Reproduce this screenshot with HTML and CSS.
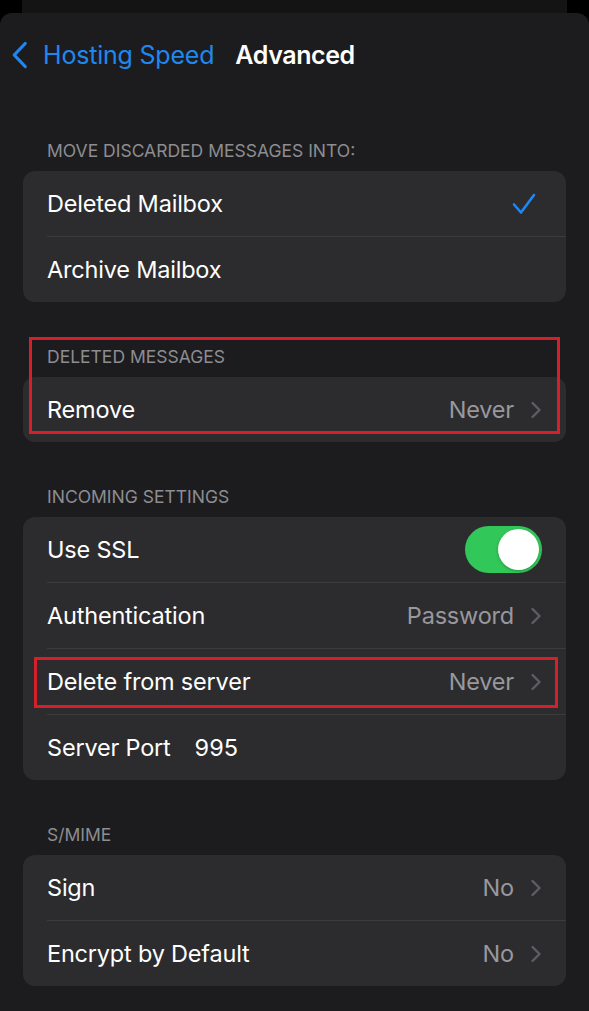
FILE: index.html
```html
<!DOCTYPE html>
<html>
<head>
<meta charset="utf-8">
<link rel="stylesheet" href="styles.css">
</head>
<body>
<div class="back-card"></div>
<div class="sheet">
  <div class="nav">
    <div class="back">
      <svg class="back-chevron" width="18" height="28" viewBox="0 0 18 28"><path d="M15.2 2.5 L4.2 14 L15.2 25.5" fill="none" stroke="#1f88f0" stroke-width="3.2" stroke-linecap="round" stroke-linejoin="round"/></svg>
      <span class="back-label">Hosting Speed</span>
    </div>
    <div class="title">Advanced</div>
  </div>

  <div class="content">
    <section class="section">
      <div class="sec-header">MOVE DISCARDED MESSAGES INTO:</div>
      <div class="group">
        <div class="row">
          <span class="label">Deleted Mailbox</span>
          <svg class="check" width="24" height="22" viewBox="0 0 24 22"><path d="M2 11.5 L9 19.5 L22 2" fill="none" stroke="#1f88f0" stroke-width="2.6" stroke-linecap="round" stroke-linejoin="round"/></svg>
        </div>
        <div class="row">
          <span class="label">Archive Mailbox</span>
        </div>
      </div>
    </section>

    <section class="section">
      <div class="sec-header">DELETED MESSAGES</div>
      <div class="group">
        <div class="row">
          <span class="label">Remove</span>
          <span class="value">Never</span>
          <svg class="chev" width="12" height="18" viewBox="0 0 12 18"><path d="M2.5 2 L9.5 9 L2.5 16" fill="none" stroke="#5d5d62" stroke-width="2.4" stroke-linecap="round" stroke-linejoin="round"/></svg>
        </div>
      </div>
      <div class="annot annot-deleted"></div>
    </section>

    <section class="section">
      <div class="sec-header">INCOMING SETTINGS</div>
      <div class="group">
        <div class="row">
          <span class="label">Use SSL</span>
          <div class="toggle"><div class="knob"></div></div>
        </div>
        <div class="row">
          <span class="label">Authentication</span>
          <span class="value">Password</span>
          <svg class="chev" width="12" height="18" viewBox="0 0 12 18"><path d="M2.5 2 L9.5 9 L2.5 16" fill="none" stroke="#5d5d62" stroke-width="2.4" stroke-linecap="round" stroke-linejoin="round"/></svg>
        </div>
        <div class="row">
          <span class="label">Delete from server</span>
          <span class="value">Never</span>
          <svg class="chev" width="12" height="18" viewBox="0 0 12 18"><path d="M2.5 2 L9.5 9 L2.5 16" fill="none" stroke="#5d5d62" stroke-width="2.4" stroke-linecap="round" stroke-linejoin="round"/></svg>
          <div class="annot annot-server"></div>
        </div>
        <div class="row">
          <span class="label port-label">Server Port</span>
          <span class="port-value">995</span>
        </div>
      </div>
    </section>

    <section class="section">
      <div class="sec-header">S/MIME</div>
      <div class="group">
        <div class="row">
          <span class="label">Sign</span>
          <span class="value">No</span>
          <svg class="chev" width="12" height="18" viewBox="0 0 12 18"><path d="M2.5 2 L9.5 9 L2.5 16" fill="none" stroke="#5d5d62" stroke-width="2.4" stroke-linecap="round" stroke-linejoin="round"/></svg>
        </div>
        <div class="row">
          <span class="label">Encrypt by Default</span>
          <span class="value">No</span>
          <svg class="chev" width="12" height="18" viewBox="0 0 12 18"><path d="M2.5 2 L9.5 9 L2.5 16" fill="none" stroke="#5d5d62" stroke-width="2.4" stroke-linecap="round" stroke-linejoin="round"/></svg>
        </div>
      </div>
    </section>
  </div>
</div>
</body>
</html>
```

FILE: styles.css
```css
* { box-sizing: border-box; }
html, body {
  margin: 0;
  padding: 0;
  background: #000;
}
body {
  font-family: "Inter", "Roboto", "Liberation Sans", sans-serif;
  color: #fff;
  width: 589px;
  height: 1011px;
  overflow: hidden;
}
.back-card {
  height: 13px;
  margin: 0 22px;
  background: #141415;
}
.sheet {
  background: #1c1c1e;
  border-radius: 12px 12px 0 0;
  height: 998px;
}
.nav {
  height: 83px;
  display: flex;
  align-items: center;
  padding-left: 10px;
}
.back {
  display: flex;
  align-items: center;
  gap: 15px;
}
.back-chevron { display: block; }
.back-label {
  color: #1f88f0;
  font-size: 25px;
  letter-spacing: -0.2px;
}
.title {
  margin-left: 21px;
  font-size: 25px;
  font-weight: 600;
  letter-spacing: -0.4px;
}
.content {
  padding: 0 23px;
}
.section {
  position: relative;
  padding-top: 45px;
}
.sec-header {
  height: 20px;
  line-height: 20px;
  padding-left: 24px;
  margin-bottom: 10px;
  font-size: 17.5px;
  color: #8d8d92;
}
.group {
  background: #2c2c2e;
  border-radius: 12px;
  overflow: hidden;
}
.row {
  position: relative;
  height: 65px;
  display: flex;
  align-items: center;
  padding: 0 24px;
}
.row + .row {
  height: 66px;
  padding-top: 1px;
}
.row + .row::before {
  content: "";
  position: absolute;
  left: 24px;
  right: 0;
  top: 0;
  height: 1px;
  background: #3b3b3e;
}
.label {
  font-size: 23.5px;
  letter-spacing: -0.2px;
  flex: 1;
}
.value {
  font-size: 23.5px;
  color: #98989e;
  letter-spacing: -0.2px;
  margin-right: 16px;
}
.chev { display: block; }
.check { display: block; margin-right: 6px; }
.toggle {
  width: 77px;
  height: 47px;
  border-radius: 24px;
  background: #32c759;
  position: relative;
}
.knob {
  position: absolute;
  right: 3px;
  top: 3px;
  width: 41px;
  height: 41px;
  border-radius: 50%;
  background: #fff;
  box-shadow: 0 1px 3px rgba(0,0,0,0.25);
}
.port-label { flex: 0 0 auto; }
.port-value {
  font-size: 23.5px;
  margin-left: 24px;
  flex: 1;
}
.annot {
  position: absolute;
  border: 3px solid #d51f2b;
  pointer-events: none;
}
.annot-deleted {
  top: 35px;
  left: 6px;
  width: 531px;
  height: 97px;
}
.annot-server {
  top: 9px;
  left: 11px;
  width: 524px;
  height: 51px;
}
```
